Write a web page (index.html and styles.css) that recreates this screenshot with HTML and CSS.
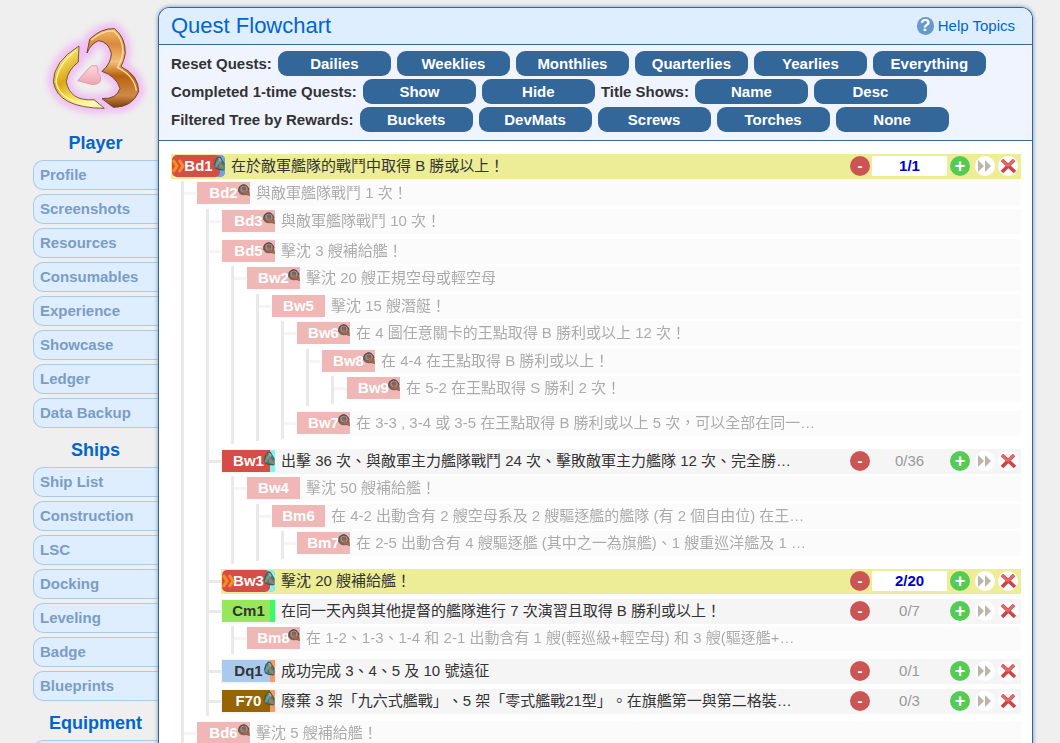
FILE: index.html
```html
<!DOCTYPE html>
<html lang="zh-Hant">
<head>
<meta charset="utf-8">
<title>Quest Flowchart</title>
<link rel="stylesheet" href="styles.css">
</head>
<body>
<svg class="defs" aria-hidden="true">
  <symbol id="reward" viewBox="0 0 12 16">
    <path d="M1 9Q2 3 5 1Q8 0 9 4L12 9V15H9Q4 15 1 12Z" fill="#4f7775"/>
    <path d="M2 11Q3 5 6 4L6 8Q4 9 4 12Z" fill="#62a39e"/>
    <path d="M5 2Q8 1 9 5L7 7Z" fill="#a3a79c"/>
    <path d="M7 8Q9 8 11 11L10 14Q7 14 6 12Z" fill="#598f90"/>
    <path d="M7 6L7 12M7 9L11 14" stroke="#c07a48" stroke-width="1.2" fill="none"/>
    <path d="M1 10Q2 3 5 1Q8 0 9 4L12 9M2 13Q6 15 11 15" stroke="#3d4c4b" stroke-width=".9" fill="none"/>
  </symbol>
  <symbol id="reward-done" viewBox="0 0 12 12">
    <path d="M6 0Q10 1 11 6L12 12L8 11Q3 12 1 9Q-1 3 3 1Z" fill="#7a6360"/>
    <circle cx="6" cy="5" r="3" fill="none" stroke="#a29692" stroke-width="1.2"/>
    <path d="M5 5L7 10M6 6L11 11M7 9H9" stroke="#b4683f" stroke-width="1.3" fill="none"/>
    <path d="M1 8Q0 2 5 1Q10 1 11 6" stroke="#5b4645" fill="none"/>
  </symbol>
  <symbol id="chevrons" viewBox="0 0 14 16">
    <path d="M1 2L5 8L1 14M7 2L11 8L7 14" fill="none" stroke="#f7901f" stroke-width="3"/>
  </symbol>
  <symbol id="forward" viewBox="0 0 20 20">
    <path d="M3 4L9 10L3 16ZM10 4L16 10L10 16Z" fill="#bdb5aa"/>
  </symbol>
  <symbol id="cross" viewBox="0 0 20 20">
    <path d="M4 4L17 16M16 4L4 16" stroke="#cf4245" stroke-width="3.6"/>
    <path d="M4 4L10 10M16 4L10 10" stroke="#e4686a" stroke-width="2.6" fill="none"/>
  </symbol>
</svg>

<div class="page">
  <nav class="sidebar" aria-label="Main">
    <svg class="logo" viewBox="0 0 300 300" role="img" aria-label="KC3">
      <defs>
        <linearGradient id="gold" x1="0" y1="0" x2=".6" y2="1"><stop offset="0" stop-color="#fff3a0"/><stop offset=".25" stop-color="#f3dc60"/><stop offset=".5" stop-color="#dca514"/><stop offset=".75" stop-color="#f6dc58"/><stop offset="1" stop-color="#fff7b0"/></linearGradient>
        <linearGradient id="bronze" x1="0" y1="0" x2="0" y2="1"><stop offset="0" stop-color="#f3b866"/><stop offset=".2" stop-color="#d98a3c"/><stop offset=".42" stop-color="#f3c07a"/><stop offset=".6" stop-color="#b9620f"/><stop offset=".85" stop-color="#cf8a48"/><stop offset="1" stop-color="#7c3f0a"/></linearGradient>
        <linearGradient id="pink" x1="0" y1="0" x2="0" y2="1"><stop offset="0" stop-color="#ffd8dd"/><stop offset="1" stop-color="#efa3b3"/></linearGradient>
        <filter id="glow" x="-20%" y="-20%" width="140%" height="140%"><feGaussianBlur stdDeviation="9"/></filter>
      </defs>
      <g filter="url(#glow)" fill="none" stroke="#f1c0f3" stroke-width="34" stroke-linejoin="round">
        <path d="M97 78Q22 125 22 185Q34 264 175 265L144 239Q72 245 61 185Q65 150 97 126Z"/>
        <path d="M123 99L131 58Q165 24 205 26Q238 50 238 100Q234 122 225 140Q278 165 278 215Q258 262 202 262L168 236Q212 238 222 205Q210 168 168 154Q196 130 196 100Q188 66 158 62Q135 70 123 99Z"/>
      </g>
      <path d="M99 78Q22 125 22 185Q34 264 175 265L144 239Q72 245 61 185Q65 150 97 126Z" fill="url(#gold)" stroke="#6b6244" stroke-width="3"/>
      <path d="M90 91Q35 135 30 185Q40 248 150 257" fill="none" stroke="#fff4a8" stroke-width="4"/>
      <path d="M123 99L131 58Q165 24 205 26Q238 50 238 100Q234 122 225 140Q278 165 278 215Q258 262 202 262L168 236Q212 238 222 205Q210 168 168 154Q196 130 196 100Q188 66 158 62Q135 70 123 99Z" fill="url(#bronze)" stroke="#6b4a2c" stroke-width="3"/>
      <path d="M136 60Q170 31 203 33Q231 54 231 98Q226 124 214 142Q266 168 271 212" fill="none" stroke="#ffe0a0" stroke-width="4"/>
      <path d="M95 182L126 147Q136 133 152 137Q158 148 155 159Q167 168 163 184Q156 194 140 194Z" fill="url(#pink)" stroke="#d7a1ab" stroke-width="3"/>
    </svg>
    <h2>Player</h2>
    <ul class="menu">
      <li><a href="#profile">Profile</a></li>
      <li><a href="#screenshots">Screenshots</a></li>
      <li><a href="#resources">Resources</a></li>
      <li><a href="#consumables">Consumables</a></li>
      <li><a href="#experience">Experience</a></li>
      <li><a href="#showcase">Showcase</a></li>
      <li><a href="#ledger">Ledger</a></li>
      <li><a href="#backup">Data Backup</a></li>
    </ul>
    <h2>Ships</h2>
    <ul class="menu">
      <li><a href="#ships">Ship List</a></li>
      <li><a href="#construction">Construction</a></li>
      <li><a href="#lsc">LSC</a></li>
      <li><a href="#docking">Docking</a></li>
      <li><a href="#leveling">Leveling</a></li>
      <li><a href="#badge">Badge</a></li>
      <li><a href="#blueprints">Blueprints</a></li>
    </ul>
    <h2>Equipment</h2>
    <ul class="menu"><li><a href="#equipment" aria-label="Equipment"></a></li></ul>
  </nav>

  <main class="panel">
    <header class="panel-head">
      <h1>Quest Flowchart</h1>
      <a class="help" href="#help"><span class="help-icon" aria-hidden="true">?</span>Help Topics</a>
    </header>
    <section class="filters">
      <div class="filter-row"><span>Reset Quests:</span><button>Dailies</button><button>Weeklies</button><button>Monthlies</button><button>Quarterlies</button><button>Yearlies</button><button>Everything</button></div>
      <div class="filter-row"><span>Completed 1-time Quests:</span><button>Show</button><button>Hide</button><span>Title Shows:</span><button>Name</button><button>Desc</button></div>
      <div class="filter-row"><span>Filtered Tree by Rewards:</span><button>Buckets</button><button>DevMats</button><button>Screws</button><button>Torches</button><button>None</button></div>
    </section>

    <ul class="quests">
      <li>
        <div class="quest active">
          <span class="badge sortie daily picked"><svg class="chevrons"><use href="#chevrons"/></svg>Bd1<svg class="reward"><use href="#reward"/></svg></span>
          <span class="title">在於敵軍艦隊的戰鬥中取得 B 勝或以上！</span>
          <span class="controls"><button class="minus">-</button><span class="count">1/1</span><button class="plus">+</button><button class="skip" aria-label="Skip"><svg><use href="#forward"/></svg></button><button class="remove" aria-label="Remove"><svg><use href="#cross"/></svg></button></span>
        </div>
        <ul class="odd">
          <li>
            <div class="quest done"><span class="badge sortie">Bd2<svg class="reward"><use href="#reward-done"/></svg></span><span class="title">與敵軍艦隊戰鬥 1 次！</span></div>
            <ul>
              <li><div class="quest done"><span class="badge sortie">Bd3<svg class="reward"><use href="#reward-done"/></svg></span><span class="title">與敵軍艦隊戰鬥 10 次！</span></div></li>
              <li>
                <div class="quest done"><span class="badge sortie">Bd5<svg class="reward"><use href="#reward-done"/></svg></span><span class="title">擊沈 3 艘補給艦！</span></div>
                <ul class="odd">
                  <li>
                    <div class="quest done"><span class="badge sortie">Bw2<svg class="reward"><use href="#reward-done"/></svg></span><span class="title">擊沈 20 艘正規空母或輕空母</span></div>
                    <ul>
                      <li>
                        <div class="quest done"><span class="badge sortie">Bw5</span><span class="title">擊沈 15 艘潛艇！</span></div>
                        <ul class="odd">
                          <li>
                            <div class="quest done"><span class="badge sortie">Bw6<svg class="reward"><use href="#reward-done"/></svg></span><span class="title">在 4 圖任意關卡的王點取得 B 勝利或以上 12 次！</span></div>
                            <ul>
                              <li>
                                <div class="quest done"><span class="badge sortie">Bw8<svg class="reward"><use href="#reward-done"/></svg></span><span class="title">在 4-4 在王點取得 B 勝利或以上！</span></div>
                                <ul class="odd">
                                  <li><div class="quest done"><span class="badge sortie">Bw9<svg class="reward"><use href="#reward-done"/></svg></span><span class="title">在 5-2 在王點取得 S 勝利 2 次！</span></div></li>
                                </ul>
                              </li>
                            </ul>
                          </li>
                          <li><div class="quest done"><span class="badge sortie">Bw7<svg class="reward"><use href="#reward-done"/></svg></span><span class="title">在 3-3 , 3-4 或 3-5 在王點取得 B 勝利或以上 5 次，可以全部在同一…</span></div></li>
                        </ul>
                      </li>
                    </ul>
                  </li>
                </ul>
              </li>
              <li>
                <div class="quest">
                  <span class="badge sortie weekly">Bw1<svg class="reward"><use href="#reward"/></svg></span>
                  <span class="title">出擊 36 次、與敵軍主力艦隊戰鬥 24 次、擊敗敵軍主力艦隊 12 次、完全勝…</span>
                  <span class="controls"><button class="minus">-</button><span class="count">0/36</span><button class="plus">+</button><button class="skip" aria-label="Skip"><svg><use href="#forward"/></svg></button><button class="remove" aria-label="Remove"><svg><use href="#cross"/></svg></button></span>
                </div>
                <ul class="odd">
                  <li>
                    <div class="quest done"><span class="badge sortie">Bw4</span><span class="title">擊沈 50 艘補給艦！</span></div>
                    <ul>
                      <li>
                        <div class="quest done"><span class="badge sortie">Bm6</span><span class="title">在 4-2 出動含有 2 艘空母系及 2 艘驅逐艦的艦隊 (有 2 個自由位) 在王…</span></div>
                        <ul class="odd">
                          <li><div class="quest done"><span class="badge sortie">Bm7<svg class="reward"><use href="#reward-done"/></svg></span><span class="title">在 2-5 出動含有 4 艘驅逐艦 (其中之一為旗艦)、1 艘重巡洋艦及 1 …</span></div></li>
                        </ul>
                      </li>
                    </ul>
                  </li>
                </ul>
              </li>
              <li>
                <div class="quest active">
                  <span class="badge sortie weekly picked"><svg class="chevrons"><use href="#chevrons"/></svg>Bw3<svg class="reward"><use href="#reward"/></svg></span>
                  <span class="title">擊沈 20 艘補給艦！</span>
                  <span class="controls"><button class="minus">-</button><span class="count">2/20</span><button class="plus">+</button><button class="skip" aria-label="Skip"><svg><use href="#forward"/></svg></button><button class="remove" aria-label="Remove"><svg><use href="#cross"/></svg></button></span>
                </div>
              </li>
              <li>
                <div class="quest">
                  <span class="badge practice monthly">Cm1</span>
                  <span class="title">在同一天內與其他提督的艦隊進行 7 次演習且取得 B 勝利或以上！</span>
                  <span class="controls"><button class="minus">-</button><span class="count">0/7</span><button class="plus">+</button><button class="skip" aria-label="Skip"><svg><use href="#forward"/></svg></button><button class="remove" aria-label="Remove"><svg><use href="#cross"/></svg></button></span>
                </div>
                <ul class="odd">
                  <li><div class="quest done"><span class="badge sortie">Bm8<svg class="reward"><use href="#reward-done"/></svg></span><span class="title">在 1-2、1-3、1-4 和 2-1 出動含有 1 艘(輕巡級+輕空母) 和 3 艘(驅逐艦+…</span></div></li>
                </ul>
              </li>
              <li>
                <div class="quest">
                  <span class="badge expedition quarterly">Dq1<svg class="reward"><use href="#reward"/></svg></span>
                  <span class="title">成功完成 3、4、5 及 10 號遠征</span>
                  <span class="controls"><button class="minus">-</button><span class="count">0/1</span><button class="plus">+</button><button class="skip" aria-label="Skip"><svg><use href="#forward"/></svg></button><button class="remove" aria-label="Remove"><svg><use href="#cross"/></svg></button></span>
                </div>
              </li>
              <li>
                <div class="quest">
                  <span class="badge factory quarterly">F70<svg class="reward"><use href="#reward"/></svg></span>
                  <span class="title">廢棄 3 架「九六式艦戰」、5 架「零式艦戰21型」。在旗艦第一與第二格裝…</span>
                  <span class="controls"><button class="minus">-</button><span class="count">0/3</span><button class="plus">+</button><button class="skip" aria-label="Skip"><svg><use href="#forward"/></svg></button><button class="remove" aria-label="Remove"><svg><use href="#cross"/></svg></button></span>
                </div>
              </li>
            </ul>
          </li>
          <li><div class="quest done"><span class="badge sortie">Bd6<svg class="reward"><use href="#reward-done"/></svg></span><span class="title">擊沈 5 艘補給艦！</span></div></li>
        </ul>
      </li>
    </ul>
  </main>
</div>
</body>
</html>
```
FILE: styles.css
```css
* { box-sizing: border-box; }

body {
  margin: 0;
  height: 100vh;
  overflow: hidden;
  background: #efefef;
  color: #333;
  font: 15px/20px "Liberation Sans", "Noto Sans CJK TC", sans-serif;
}

ul { list-style: none; margin: 0; padding: 0; }
a { text-decoration: none; }
button { font: inherit; border: 0; padding: 0; cursor: pointer; }
.defs { position: absolute; width: 0; height: 0; }

.page {
  display: flex;
  min-height: 100vh;
  padding: 7px 27px 0 33px;
}

/* Sidebar */
.sidebar {
  flex: 0 0 125px;
  padding-top: 13px;
}
.logo {
  display: block;
  width: 100px;
  height: 100px;
  margin: 0 auto;
  overflow: visible;
}
.sidebar h2 {
  margin: 13px 0 7px;
  font-size: 18px;
  line-height: 20px;
  text-align: center;
  color: #0066cc;
}
.sidebar .menu + h2 { margin-top: 12px; }
.menu {
  display: flex;
  flex-direction: column;
  gap: 4px;
}
.menu a {
  display: block;
  height: 30px;
  padding-left: 6px;
  border: 1px solid #a9cbe8;
  border-right: 0;
  border-radius: 10px 0 0 10px;
  background: #deeeff;
  color: #7b9dc3;
  font-weight: bold;
  line-height: 28px;
}

/* Main panel */
.panel {
  flex: 1;
  min-width: 0;
  border: 1px solid #336699;
  border-bottom: 0;
  border-radius: 12px 12px 0 0;
  background: #fff;
  box-shadow: 0 0 4px #6f90b3;
}
.panel-head {
  display: flex;
  align-items: center;
  justify-content: space-between;
  height: 37px;
  padding: 0 17px 0 12px;
  border-bottom: 1px solid #336699;
  border-radius: 11px 11px 0 0;
  background: #deeeff;
}
.panel-head h1 {
  margin: 0;
  font-size: 22px;
  font-weight: normal;
  line-height: 36px;
  color: #0066cc;
}
.help {
  display: flex;
  align-items: center;
  gap: 4px;
  color: #0066cc;
}
.help-icon {
  width: 17px;
  height: 18px;
  border-radius: 9px;
  background: #6699cc;
  color: #fff;
  font-size: 17px;
  font-weight: bold;
  line-height: 17px;
  text-align: center;
}

.filters {
  display: flex;
  flex-direction: column;
  gap: 3px;
  padding: 6px 12px 8px;
  border-bottom: 1px solid #336699;
  background: #eff4ff;
  font-weight: bold;
}
.filter-row {
  display: flex;
  align-items: center;
  gap: 6px;
}
.filter-row button {
  width: 113px;
  height: 25px;
  border-radius: 9px;
  background: #336699;
  color: #fff;
}

/* Quest tree: row spacing alternates between odd and even levels */
.quests { padding: 13px 11px 0 12px; }
.quests ul {
  margin: 0 0 2px 10px;
  padding-left: 12px;
  border-left: 3px solid #e9e9e9;
}
.quests li { display: flow-root; }
.quests li + li { margin-top: 3px; }
.quests .odd > li + li { margin-top: 2px; }
.quest { margin-bottom: 2px; }
.quests .odd > li > .quest,
.quests .odd > li > ul { margin-bottom: 3px; }

.quest {
  position: relative;
  display: flex;
  align-items: center;
  height: 25px;
  padding: 0 3px 1px 1px;
  background: #f5f5f5;
}
.quests ul .quest::before {
  content: "";
  position: absolute;
  left: -12px;
  top: 11px;
  width: 12px;
  height: 3px;
  background: #e9e9e9;
}
.quest.active { background: #eded98; }
.quest.done { background: #fbfbfb; }
.quests ul .quest.done::before { background: #f5f5f5; }
.done .title { opacity: .4; }

.badge {
  position: relative;
  flex: 0 0 53px;
  height: 22px;
  font-weight: bold;
  line-height: 22px;
  text-align: center;
}
.sortie { background: #d64d45; color: #fff; }
.done .sortie { background: #efb8b6; }
.practice { background: #98e65c; }
.expedition { background: #a9caee; }
.factory { background: #966400; color: #fff; }
.daily { box-shadow: inset -5px 0 #68a5ec; }
.weekly { box-shadow: inset -5px 0 #7cf8f2; }
.monthly { box-shadow: inset -5px 0 #35ff68; }
.quarterly { box-shadow: inset -5px 0 #fb9b60; }
.picked { border-radius: 5px; }

.reward {
  position: absolute;
  right: 0;
  top: 1px;
  width: 12px;
  height: 15px;
}
.done .reward { height: 12px; top: 2px; }
.chevrons {
  position: absolute;
  left: 0;
  top: 3px;
  width: 14px;
  height: 16px;
}

.title {
  flex: 1;
  min-width: 0;
  margin-left: 6px;
  overflow: hidden;
  white-space: nowrap;
  line-height: 24px;
  text-spacing-trim: space-all;
}

.controls {
  display: flex;
  align-items: center;
}
.controls button {
  width: 20px;
  height: 20px;
  border-radius: 10px;
  background: #fff;
  color: #fff;
  font-weight: bold;
  line-height: 20px;
}
.controls svg { display: block; width: 20px; height: 20px; }
.controls .minus { background: #cb5555; }
.controls .plus { background: #55cb55; font-size: 18px; }
.controls .skip { margin: 0 3px 0 5px; }
.count {
  width: 75px;
  height: 20px;
  margin: 0 3px 0 2px;
  color: #999;
  text-align: center;
}
.active .count {
  background: #fff;
  color: #0000cc;
  font-weight: bold;
}
```
